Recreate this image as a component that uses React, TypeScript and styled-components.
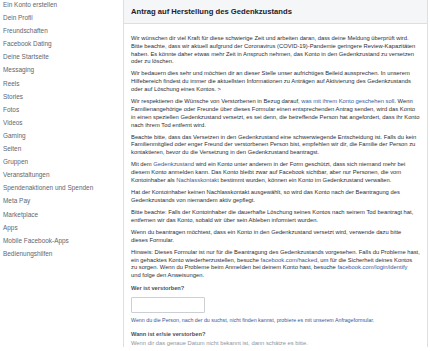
import React from "react";
import styled, { createGlobalStyle } from "styled-components";

const Global = createGlobalStyle`
  html, body { margin: 0; padding: 0; background: #fff; }
  body {
    font-family: "Liberation Sans", Arial, Helvetica, sans-serif;
  }
`;

const Page = styled.div`
  display: flex;
  align-items: flex-start;
  width: 430px;
  height: 351px;
  overflow: hidden;
`;

const Sidebar = styled.nav`
  width: 120px;
  padding-left: 3px;
  display: flex;
  flex-direction: column;
  gap: 3.1px;
  flex-shrink: 0;
`;

const NavItem = styled.a`
  display: block;
  height: 10px;
  line-height: 10px;
  font-size: 6.45px;
  color: #606770;
  text-decoration: none;
  white-space: nowrap;
`;

const Panel = styled.section`
  width: 303px;
  border-left: 1px solid #dddfe2;
  border-right: 1px solid #dddfe2;
  background: #fff;
  flex-shrink: 0;
`;

const Header = styled.header`
  height: 23px;
  background: #f5f6f7;
  border-bottom: 1px solid #dddfe2;
  display: flex;
  align-items: center;
  padding: 0 7px;
`;

const Title = styled.h2`
  margin: 0;
  font-size: 7.65px;
  font-weight: bold;
  color: #1d2129;
  white-space: nowrap;
`;

const Body = styled.div`
  padding: 11px 5px 0 7px;
`;

const Para = styled.p`
  margin: 0 0 4.3px 0;
  font-size: 5.82px;
  line-height: 7.8px;
  color: #2b2e33;
`;

const Line = styled.span`
  display: block;
  white-space: nowrap;
`;

const Link = styled.a`
  color: #385898;
  text-decoration: none;
`;

const Label = styled.div<{ $top: number; $bottom: number }>`
  font-size: 5.7px;
  font-weight: bold;
  color: #4b4f56;
  line-height: 8px;
  white-space: nowrap;
  margin: ${(p) => p.$top}px 0 ${(p) => p.$bottom}px 0;
`;

const Input = styled.input`
  display: block;
  box-sizing: border-box;
  width: 74px;
  height: 16px;
  border: 1px solid #ccd0d5;
  border-radius: 1px;
  margin: 0;
  padding: 0;
  background: #fff;
`;

const Help = styled.div`
  font-size: 5.3px;
  line-height: 7px;
  color: #385898;
  margin-top: 4px;
  white-space: nowrap;
`;

const Hint = styled.div`
  font-size: 5.8px;
  line-height: 7px;
  color: #90949c;
  white-space: nowrap;
`;

const navItems = [
  "Ein Konto erstellen",
  "Dein Profil",
  "Freundschaften",
  "Facebook Dating",
  "Deine Startseite",
  "Messaging",
  "Reels",
  "Stories",
  "Fotos",
  "Videos",
  "Gaming",
  "Seiten",
  "Gruppen",
  "Veranstaltungen",
  "Spendenaktionen und Spenden",
  "Meta Pay",
  "Marketplace",
  "Apps",
  "Mobile Facebook-Apps",
  "Bedienungshilfen",
];

const paragraphs: React.ReactNode[][] = [
  [
    "Wir wünschen dir viel Kraft für diese schwierige Zeit und arbeiten daran, dass deine Meldung überprüft wird.",
    "Bitte beachte, dass wir aktuell aufgrund der Coronavirus (COVID-19)-Pandemie geringere Review-Kapazitäten",
    "haben. Es könnte daher etwas mehr Zeit in Anspruch nehmen, das Konto in den Gedenkzustand zu versetzen",
    "oder zu löschen.",
  ],
  [
    "Wir bedauern dies sehr und möchten dir an dieser Stelle unser aufrichtiges Beileid aussprechen. In unserem",
    "Hilfebereich findest du immer die aktuellsten Informationen zu Anträgen auf Aktivierung des Gedenkzustands",
    "oder auf Löschung eines Kontos. >",
  ],
  [
    <>
      Wir respektieren die Wünsche von Verstorbenen in Bezug darauf,{" "}
      <Link href="#">was mit ihrem Konto geschehen soll</Link>. Wenn
    </>,
    "Familienangehörige oder Freunde über dieses Formular einen entsprechenden Antrag senden, wird das Konto",
    "in einen speziellen Gedenkzustand versetzt, es sei denn, die betreffende Person hat angefordert, dass ihr Konto",
    "nach ihrem Tod entfernt wird.",
  ],
  [
    "Beachte bitte, dass das Versetzen in den Gedenkzustand eine schwerwiegende Entscheidung ist. Falls du kein",
    "Familienmitglied oder enger Freund der verstorbenen Person bist, empfehlen wir dir, die Familie der Person zu",
    "kontaktieren, bevor du die Versetzung in den Gedenkzustand beantragst.",
  ],
  [
    <>
      Mit dem <Link href="#">Gedenkzustand</Link> wird ein Konto unter anderem in der Form geschützt, dass sich
      niemand mehr bei
    </>,
    "diesem Konto anmelden kann. Das Konto bleibt zwar auf Facebook sichtbar, aber nur Personen, die vom",
    <>
      Kontoinhaber als <Link href="#">Nachlasskontakt</Link> bestimmt wurden, können ein Konto im Gedenkzustand
      verwalten.
    </>,
  ],
  [
    "Hat der Kontoinhaber keinen Nachlasskontakt ausgewählt, so wird das Konto nach der Beantragung des",
    "Gedenkzustands von niemandem aktiv gepflegt.",
  ],
  [
    "Bitte beachte: Falls der Kontoinhaber die dauerhafte Löschung seines Kontos nach seinem Tod beantragt hat,",
    "entfernen wir das Konto, sobald wir über sein Ableben informiert wurden.",
  ],
  [
    "Wenn du beantragen möchtest, dass ein Konto in den Gedenkzustand versetzt wird, verwende dazu bitte",
    "dieses Formular.",
  ],
  [
    "Hinweis: Dieses Formular ist nur für die Beantragung des Gedenkzustands vorgesehen. Falls du Probleme hast,",
    <>
      ein gehacktes Konto wiederherzustellen, besuche <Link href="#">facebook.com/hacked</Link>, um für die
      Sicherheit deines Kontos
    </>,
    <>
      zu sorgen. Wenn du Probleme beim Anmelden bei deinem Konto hast, besuche{" "}
      <Link href="#">facebook.com/login/identify</Link>
    </>,
    "und folge den Anweisungen.",
  ],
];

export default function App() {
  return (
    <>
      <Global />
      <Page>
        <Sidebar>
          {navItems.map((n) => (
            <NavItem key={n} href="#">
              {n}
            </NavItem>
          ))}
        </Sidebar>
        <Panel>
          <Header>
            <Title>Antrag auf Herstellung des Gedenkzustands</Title>
          </Header>
          <Body>
            {paragraphs.map((lines, i) => (
              <Para key={i}>
                {lines.map((l, j) => (
                  <Line key={j}>{l}</Line>
                ))}
              </Para>
            ))}
            <Label $top={1} $bottom={4.4}>
              Wer ist verstorben?
            </Label>
            <Input type="text" />
            <Help>
              Wenn du die Person, nach der du suchst, nicht finden kannst, probiere es mit unserem Anfrageformular.
            </Help>
            <Label $top={6} $bottom={2.5}>
              Wann ist er/sie verstorben?
            </Label>
            <Hint>Wenn dir das genaue Datum nicht bekannt ist, dann schätze es bitte.</Hint>
          </Body>
        </Panel>
      </Page>
    </>
  );
}
